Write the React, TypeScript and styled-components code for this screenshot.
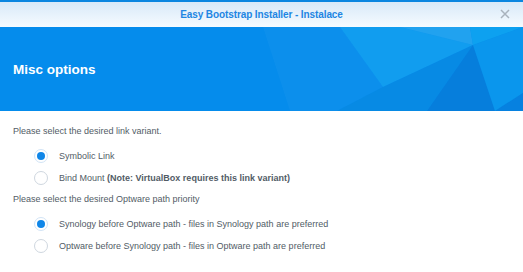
import React, { useState } from "react";
import styled, { createGlobalStyle } from "styled-components";

const GlobalStyle = createGlobalStyle`
  html, body {
    margin: 0;
    padding: 0;
    background: #ffffff;
  }
  body {
    font-family: "Liberation Sans", Arial, sans-serif;
  }
`;

type Option = { value: string; label: React.ReactNode };

const linkOptions: Option[] = [
  { value: "symlink", label: "Symbolic Link" },
  {
    value: "bind",
    label: (
      <>
        Bind Mount <b>(Note: VirtualBox requires this link variant)</b>
      </>
    ),
  },
];

const pathOptions: Option[] = [
  {
    value: "synology",
    label: "Synology before Optware path - files in Synology path are preferred",
  },
  {
    value: "optware",
    label: "Optware before Synology path - files in Optware path are preferred",
  },
];

export default function App() {
  const [link, setLink] = useState("symlink");
  const [path, setPath] = useState("synology");

  return (
    <>
      <GlobalStyle />
      <Window>
        <TitleBar>
          <Title>Easy Bootstrap Installer - Instalace</Title>
          <CloseButton aria-label="close">
            <svg width="10" height="10" viewBox="0 0 10 10">
              <path d="M1 1 L9 9 M9 1 L1 9" stroke="#a9b3bd" strokeWidth="1.5" />
            </svg>
          </CloseButton>
        </TitleBar>

        <Banner>
          {/* faceted background of the wizard header */}
          <BannerArt viewBox="0 0 523 84" preserveAspectRatio="none">
            <polygon points="263,0 340,0 383,60 337,84 290,84" fill="#ffffff" opacity="0.03" />
            <polygon points="340,0 400,0 473,18 383,60" fill="#22b6f4" opacity="0.4" />
            <polygon points="400,0 470,0 473,18" fill="#4cc2f6" opacity="0.4" />
            <polygon points="470,0 523,0 473,18" fill="#10a8f2" opacity="0.75" />
            <polygon points="383,60 473,18 427,84 337,84" fill="#0a88dc" opacity="0.45" />
            <polygon points="473,18 427,84 495,84" fill="#0674d2" opacity="0.6" />
            <polygon points="473,18 523,0 523,66 495,84" fill="#0fa0ee" opacity="0.5" />
            <polygon points="523,66 495,84 523,84" fill="#0876d4" opacity="0.5" />
          </BannerArt>
          <Heading>Misc options</Heading>
        </Banner>

        <Content>
          <Question>Please select the desired link variant.</Question>
          <RadioList>
            {linkOptions.map((o) => (
              <RadioRow key={o.value} onClick={() => setLink(o.value)}>
                <RadioDot $checked={link === o.value} />
                <RadioLabel>{o.label}</RadioLabel>
              </RadioRow>
            ))}
          </RadioList>

          <Question>Please select the desired Optware path priority</Question>
          <RadioList>
            {pathOptions.map((o) => (
              <RadioRow key={o.value} onClick={() => setPath(o.value)}>
                <RadioDot $checked={path === o.value} />
                <RadioLabel>{o.label}</RadioLabel>
              </RadioRow>
            ))}
          </RadioList>
        </Content>
      </Window>
    </>
  );
}

const Window = styled.div`
  width: 523px;
  height: 272px;
  overflow: hidden;
  background: #ffffff;
  border-top: 2px solid #0b86e0;
  box-sizing: border-box;
`;

const TitleBar = styled.div`
  position: relative;
  height: 25px;
  display: flex;
  align-items: center;
  justify-content: center;
  background: linear-gradient(to bottom, #d8e9f8, #f6fbff);
`;

const Title = styled.div`
  font-size: 10px;
  font-weight: bold;
  color: #1e86e3;
  letter-spacing: -0.1px;
`;

const CloseButton = styled.div`
  position: absolute;
  right: 13px;
  top: 7px;
  width: 10px;
  height: 10px;
  display: flex;
`;

const Banner = styled.div`
  position: relative;
  height: 84px;
  background: #058cec;
  display: flex;
  align-items: center;
  padding-left: 13px;
  overflow: hidden;
`;

const BannerArt = styled.svg`
  position: absolute;
  left: 0;
  top: 0;
  width: 100%;
  height: 100%;
`;

const Heading = styled.h1`
  position: relative;
  margin: 0;
  font-size: 13.5px;
  font-weight: bold;
  color: #ffffff;
`;

const Content = styled.div`
  padding: 10px 13px 0;
`;

const Question = styled.div`
  height: 20px;
  line-height: 20px;
  font-size: 9px;
  color: #525c66;
`;

const RadioList = styled.div`
  display: flex;
  flex-direction: column;
  margin-top: 4px;
  padding-left: 21px;
`;

const RadioRow = styled.div`
  height: 22px;
  display: flex;
  align-items: center;
  gap: 11px;
  cursor: pointer;
`;

const RadioDot = styled.span<{ $checked: boolean }>`
  box-sizing: border-box;
  width: 14px;
  height: 14px;
  border-radius: 50%;
  border: 1px solid ${(p) => (p.$checked ? "#d2e4f6" : "#cfd7df")};
  background: #ffffff;
  display: flex;
  align-items: center;
  justify-content: center;

  &::after {
    content: "";
    width: 8px;
    height: 8px;
    border-radius: 50%;
    background: ${(p) => (p.$checked ? "#0f86e8" : "transparent")};
  }
`;

const RadioLabel = styled.span`
  font-size: 9px;
  color: #525c66;

  b {
    font-weight: bold;
  }
`;
